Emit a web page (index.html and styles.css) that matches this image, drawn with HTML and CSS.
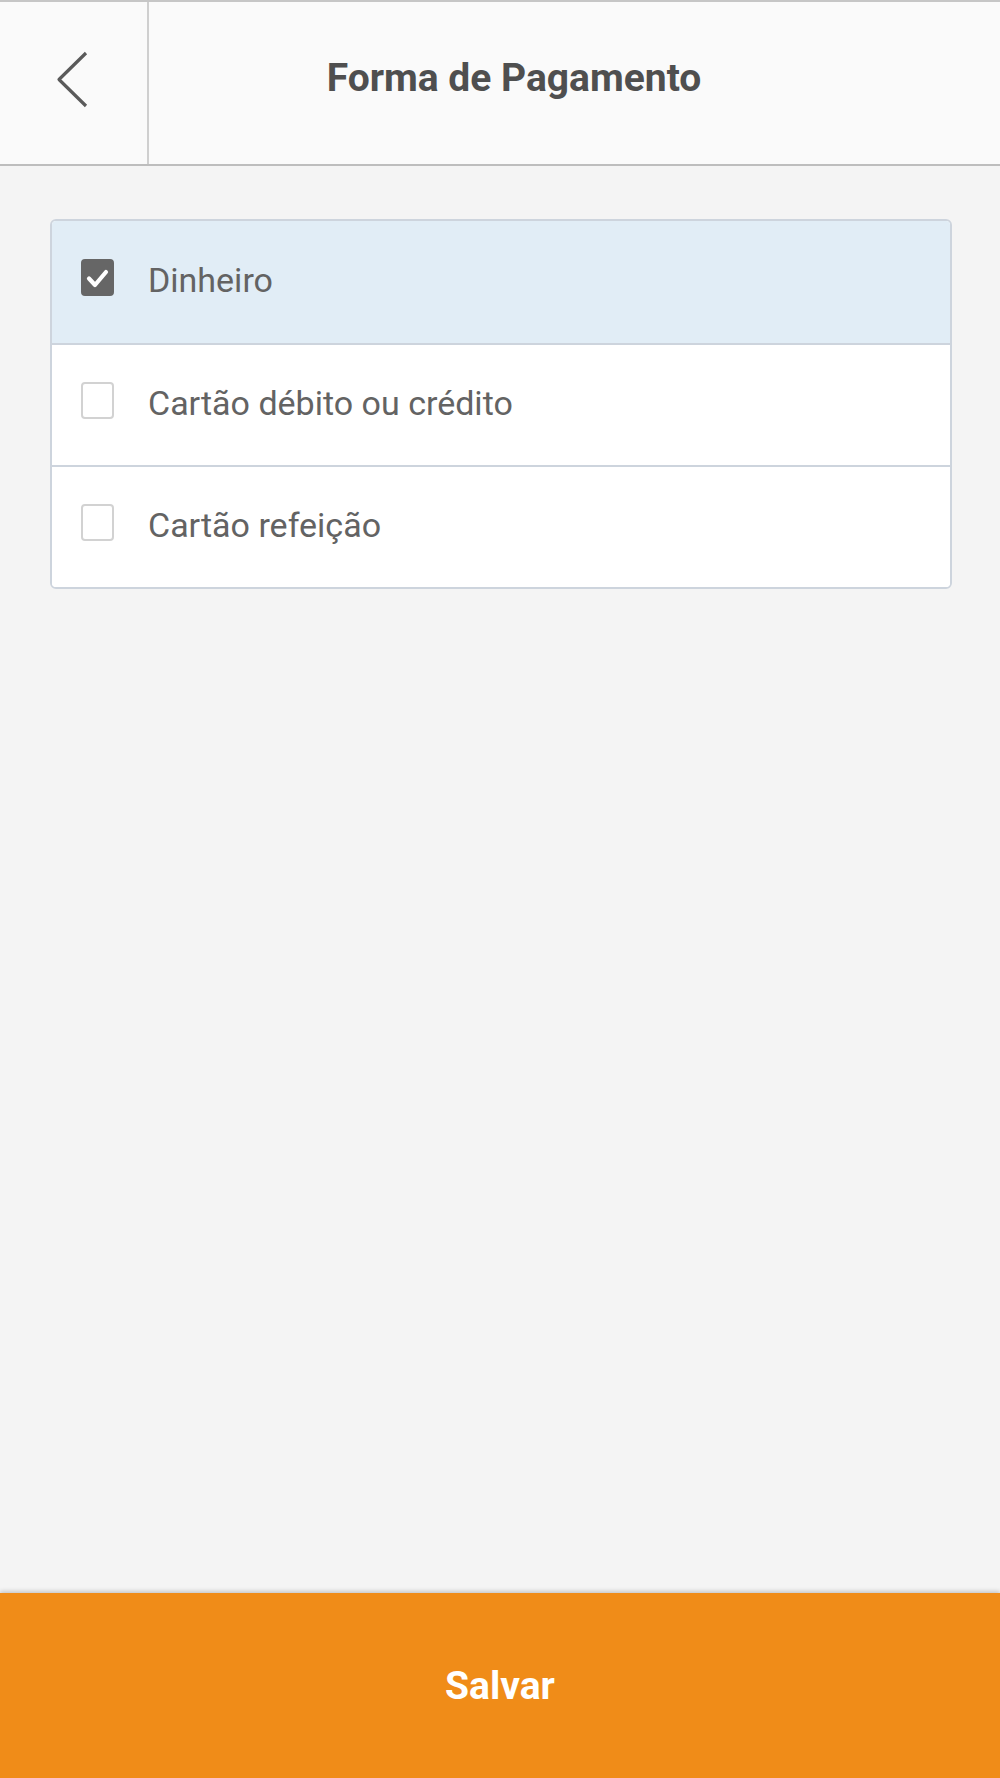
FILE: index.html
```html
<!DOCTYPE html>
<html lang="pt-BR">
<head>
<meta charset="utf-8">
<title>Forma de Pagamento</title>
<link rel="stylesheet" href="styles.css">
</head>
<body>
<div class="app">
  <header class="header">
    <button class="back" aria-label="Voltar">
      <svg width="40" height="68" viewBox="0 0 40 68" class="chev">
        <polyline points="33,7 6,33.5 33,60" fill="none" stroke="#5a5a5a" stroke-width="3.2" stroke-linecap="butt" stroke-linejoin="round"/>
      </svg>
    </button>
    <h1 class="title">Forma de Pagamento</h1>
  </header>
  <main class="content">
    <ul class="options">
      <li class="option selected">
        <span class="box checked">
          <svg width="33" height="37" viewBox="0 0 33 37">
            <polyline points="8,19.5 14,26 25,13" fill="none" stroke="#fff" stroke-width="4.2" stroke-linecap="round" stroke-linejoin="round"/>
          </svg>
        </span>
        <span class="label">Dinheiro</span>
      </li>
      <li class="option">
        <span class="box"></span>
        <span class="label">Cartão débito ou crédito</span>
      </li>
      <li class="option">
        <span class="box"></span>
        <span class="label">Cartão refeição</span>
      </li>
    </ul>
  </main>
  <footer class="footer">
    <button class="save">Salvar</button>
  </footer>
</div>
</body>
</html>
```
FILE: styles.css
```css
* { box-sizing: border-box; }
html, body { margin: 0; padding: 0; }
body {
  background: #f4f4f4;
  font-family: Roboto, "Liberation Sans", Arial, sans-serif;
}
.app {
  height: 1778px;
  display: flex;
  flex-direction: column;
}
.header {
  height: 166px;
  flex: 0 0 166px;
  display: flex;
  background: #fafafa;
  border-top: 2px solid #c6c6c6;
  border-bottom: 2px solid #bdbdbd;
}
.back {
  width: 149px;
  flex: 0 0 149px;
  border: 0;
  border-right: 2px solid #cfcfcf;
  background: transparent;
  padding: 0 0 0 53px;
  display: flex;
  align-items: flex-start;
  cursor: pointer;
}
.chev {
  display: block;
  margin-top: 44px;
}
.title {
  flex: 1;
  margin: 0;
  padding: 0 121px 11px 0;
  display: flex;
  align-items: center;
  justify-content: center;
  font-size: 39px;
  font-weight: 700;
  color: #4f4f4f;
}
.content {
  flex: 1;
  padding: 53px 48px 0 50px;
}
.options {
  list-style: none;
  margin: 0;
  padding: 0;
  border: 2px solid #cdd4dd;
  border-radius: 6px;
  background: #fff;
  overflow: hidden;
}
.option {
  height: 122px;
  display: flex;
  align-items: center;
  padding-left: 29px;
  background: #fff;
}
.option + .option {
  border-top: 2px solid #cdd4dd;
}
.option.selected {
  background: #e1edf6;
}
.box {
  width: 33px;
  height: 37px;
  flex: 0 0 33px;
  border: 2px solid #d2d2d2;
  border-radius: 4px;
  background: #fff;
  margin-bottom: 9px;
  display: flex;
}
.box.checked {
  background: #666666;
  border-color: #666666;
}
.box.checked svg {
  margin: -2px;
  display: block;
}
.label {
  margin-left: 34px;
  font-size: 34px;
  color: #636363;
  padding-bottom: 4px;
}
.footer {
  height: 185px;
  flex: 0 0 185px;
  background: #f08c18;
  box-shadow: 0 -2px 4px rgba(0, 0, 0, 0.18);
  display: flex;
}
.save {
  flex: 1;
  border: 0;
  background: transparent;
  color: #ffffff;
  font-family: Roboto, "Liberation Sans", Arial, sans-serif;
  font-size: 39px;
  font-weight: 700;
  cursor: pointer;
}
```
